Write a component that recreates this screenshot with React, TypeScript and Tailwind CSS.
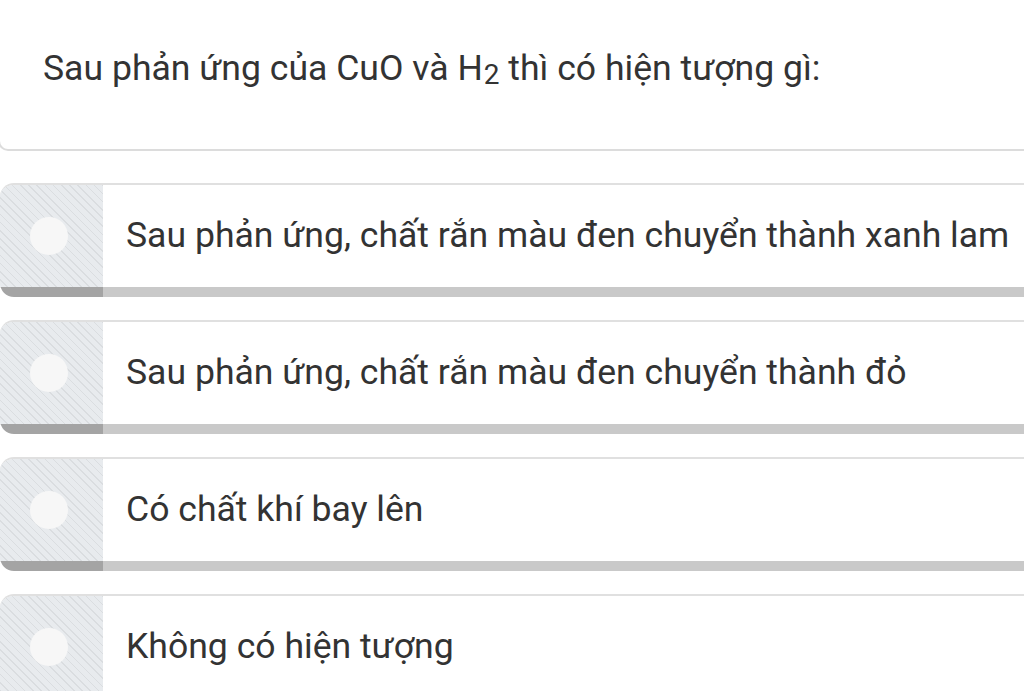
import React from "react";

const options = [
  "Sau phản ứng, chất rắn màu đen chuyển thành xanh lam",
  "Sau phản ứng, chất rắn màu đen chuyển thành đỏ",
  "Có chất khí bay lên",
  "Không có hiện tượng",
];

function Option({ text }: { text: string }) {
  return (
    <div className="w-[1100px] rounded-l-[14px] overflow-hidden border-t-2 border-[#e0e0e0] flex flex-col bg-white">
      <div className="flex h-[102px]">
        <div className="w-[103px] shrink-0 flex items-center justify-center bg-[#e6e9ec] bg-[repeating-linear-gradient(45deg,#e8ebee_0px,#e8ebee_4.7px,#dadde0_4.7px,#dadde0_5.8px)]">
          <div className="w-[38px] h-[38px] rounded-full bg-[#f7f7f7] -ml-[5px]" />
        </div>
        <div className="flex items-center pl-[23px] text-[35.6px] text-[#333] leading-none">
          {text}
        </div>
      </div>
      <div className="flex h-[10px]">
        <div className="w-[103px] shrink-0 bg-[#a4a4a4]" />
        <div className="flex-1 bg-[#c9c9c9]" />
      </div>
    </div>
  );
}

export default function App() {
  return (
    <div
      className="w-[1024px] h-[691px] overflow-hidden bg-white relative"
      style={{ fontFamily: "Roboto, 'Noto Sans', sans-serif" }}
    >
      <div className="w-[1100px] h-[151px] border-b-2 border-l-2 border-[#dcdcdc] rounded-bl-[10px] -ml-[2px] flex items-start pl-[43px] pt-[46px]">
        <p className="text-[35.6px] text-[#333] leading-[44px]">
          Sau phản ứng của CuO và H<sub className="text-[28px] relative top-[4px] ml-[1px]">2</sub> thì có hiện tượng gì:
        </p>
      </div>
      <div className="flex flex-col gap-[23px] mt-[32px]">
        {options.map((o) => (
          <Option key={o} text={o} />
        ))}
      </div>
    </div>
  );
}
